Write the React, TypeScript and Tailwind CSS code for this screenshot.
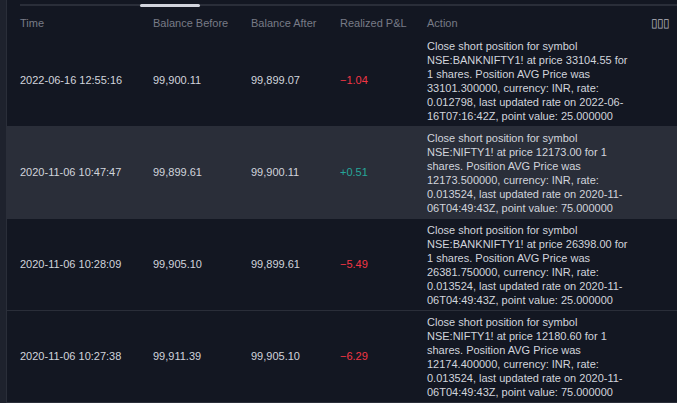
const ROWS = [
  { time: '2022-06-16 12:55:16', before: '99,900.11', after: '99,899.07', pnl: '−1.04', pos: false,
    action: 'Close short position for symbol NSE:BANKNIFTY1! at price 33104.55 for 1 shares. Position AVG Price was 33101.300000, currency: INR, rate: 0.012798, last updated rate on 2022-06-16T07:16:42Z, point value: 25.000000' },
  { time: '2020-11-06 10:47:47', before: '99,899.61', after: '99,900.11', pnl: '+0.51', pos: true, hl: true,
    action: 'Close short position for symbol NSE:NIFTY1! at price 12173.00 for 1 shares. Position AVG Price was 12173.500000, currency: INR, rate: 0.013524, last updated rate on 2020-11-06T04:49:43Z, point value: 75.000000' },
  { time: '2020-11-06 10:28:09', before: '99,905.10', after: '99,899.61', pnl: '−5.49', pos: false,
    action: 'Close short position for symbol NSE:BANKNIFTY1! at price 26398.00 for 1 shares. Position AVG Price was 26381.750000, currency: INR, rate: 0.013524, last updated rate on 2020-11-06T04:49:43Z, point value: 25.000000' },
  { time: '2020-11-06 10:27:38', before: '99,911.39', after: '99,905.10', pnl: '−6.29', pos: false,
    action: 'Close short position for symbol NSE:NIFTY1! at price 12180.60 for 1 shares. Position AVG Price was 12174.400000, currency: INR, rate: 0.013524, last updated rate on 2020-11-06T04:49:43Z, point value: 75.000000' },
];

export default function App() {
  return (
    <div className="w-[677px] h-[403px] overflow-hidden bg-[#131722] text-[11px] text-[#d1d4dc] flex" style={{ fontFamily: '"Liberation Sans", Arial, sans-serif' }}>
      <div className="w-[7px] shrink-0 border-r border-[#2a2e39] bg-[#1e222d]" />
      <div className="flex-1 flex flex-col">
        {/* Scrollbar */}
        <div className="h-[12px] pl-[13px] flex items-center">
          <div className="flex-1 h-[2px] bg-[#2a2e39] relative">
            <div className="absolute left-[120px] w-[60px] h-[3px] -top-[0.5px] bg-[#d1d4dc] rounded" />
          </div>
        </div>
        {/* Header */}
        <div className="h-[28px] flex items-center text-[#787b86]">
          <div className="w-[146px] pl-[13px]">Time</div>
          <div className="w-[98px]">Balance Before</div>
          <div className="w-[89px]">Balance After</div>
          <div className="w-[87px]">Realized P&amp;L</div>
          <div className="flex-1">Action</div>
          <div className="pr-[8px] text-[#b2b5be] text-[12px] tracking-[-1px]">▯▯▯</div>
        </div>
        {ROWS.map((r, i) => (
          <div key={i} className={`h-[92px] shrink-0 flex items-center border-b border-[#2a2e39] ${r.hl ? 'bg-[#2a2e39]' : ''}`}>
            <div className="w-[146px] pl-[13px]">{r.time}</div>
            <div className="w-[98px]">{r.before}</div>
            <div className="w-[89px]">{r.after}</div>
            <div className={`w-[87px] ${r.pos ? 'text-[#26a69a]' : 'text-[#f23645]'}`}>{r.pnl}</div>
            <div className="w-[205px] leading-[14px]">{r.action}</div>
          </div>
        ))}
      </div>
    </div>
  );
}
